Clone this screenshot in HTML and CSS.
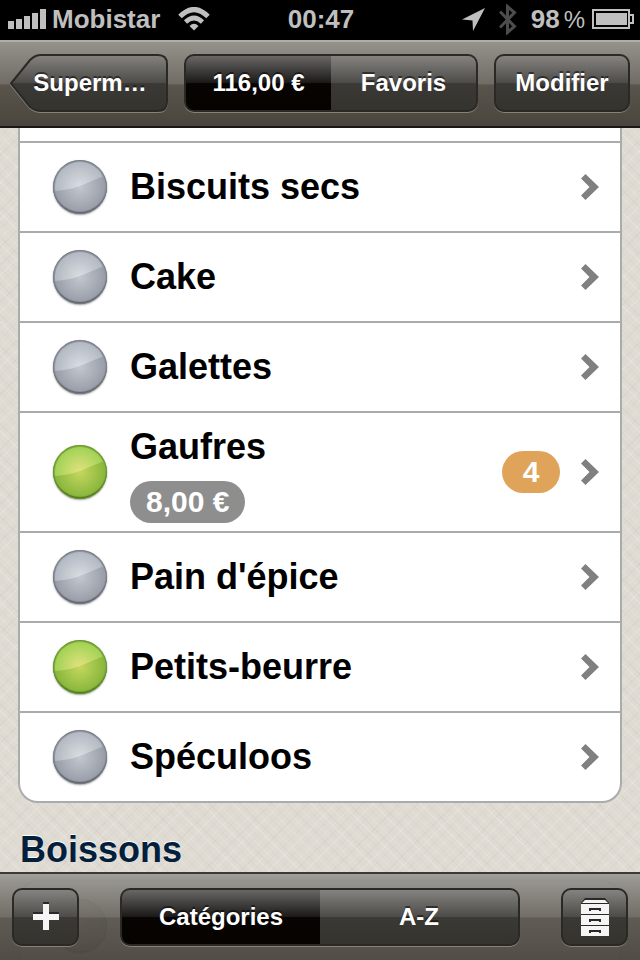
FILE: index.html
```html
<!DOCTYPE html>
<html lang="fr">
<head>
    <meta charset="UTF-8">
    <meta name="viewport" content="width=device-width, initial-scale=1.0">
    <title>Supermarché</title>
    <link rel="stylesheet" href="styles.css">
</head>
<body>
    <svg width="0" height="0" class="defs" aria-hidden="true">
        <symbol id="chevron" viewBox="0 0 18 26">
            <path d="M0 4.500 L4.500 0 L18 13 L4.500 26 L0 21.500 L8.500 13 Z" fill="#808080"/>
        </symbol>
    </svg>

    <div class="status-bar">
        <div class="status-left">
            <svg width="38" height="20" viewBox="0 0 38 20" fill="#bfbfbf">
                <path d="M0 12h6v8H0zM8 10h6v10H8zM16 7h6v13h-6zM24 4h6v16h-6zM32 0h6v20h-6z"/>
            </svg>
            <span class="carrier">Mobistar</span>
            <svg width="32" height="24" viewBox="0 0 32 24">
                <path d="M2 9.500 Q16 -4.500 30 9.500" fill="none" stroke="#bfbfbf" stroke-width="5"/>
                <path d="M7.500 15 Q16 7 24.500 15" fill="none" stroke="#bfbfbf" stroke-width="4.600"/>
                <path d="M11.500 19 Q16 14.500 20.500 19 L16 23.500 Z" fill="#bfbfbf"/>
            </svg>
        </div>
        <span class="clock">00:47</span>
        <div class="status-right">
            <svg width="23" height="23" viewBox="0 0 23 23">
                <path d="M23 0 L11 23 L10.500 12.500 L0 11.500 Z" fill="#bfbfbf"/>
            </svg>
            <svg width="18" height="31" viewBox="0 0 18 31">
                <path d="M1 7.500 L15.500 22.500 L8.500 28.500 V2.500 L15.500 8.500 L1 23.500" fill="none" stroke="#4c4c4c" stroke-width="3"/>
            </svg>
            <span class="battery-level">98<small>%</small></span>
            <svg width="42" height="20" viewBox="0 0 42 20">
                <path d="M1 1 H37 V6 H41 V14 H37 V19 H1 Z" fill="none" stroke="#bfbfbf" stroke-width="2"/>
                <path d="M37 6 V14" stroke="#bfbfbf" stroke-width="2"/>
                <rect x="4" y="4" width="31" height="12" fill="#bfbfbf"/>
            </svg>
        </div>
    </div>

    <header class="navbar">
        <button type="button" class="back-button">
            <svg class="back-shape" viewBox="0 0 158 60" preserveAspectRatio="none">
                <defs>
                    <linearGradient id="back-fill" x1="0" y1="0" x2="0" y2="1">
                        <stop offset="0" stop-color="#85837f"/>
                        <stop offset="0.500" stop-color="#4d4b47"/>
                        <stop offset="0.510" stop-color="#3b3935"/>
                        <stop offset="1" stop-color="#34332e"/>
                    </linearGradient>
                </defs>
                <path d="M1 31 L20 7 Q25 2 31 2 H148 Q157 2 157 11 V49 Q157 58 148 58 H31 Q25 58 20 54 Z" fill="none" stroke="#85827a" stroke-width="2"/>
                <path d="M1 29.500 L20 6 Q25 1 31 1 H148 Q157 1 157 10 V48 Q157 57 148 57 H31 Q25 57 20 53 Z" fill="url(#back-fill)" stroke="#2b2926" stroke-width="2"/>
            </svg>
            <span>Superm…</span>
        </button>
        <div class="segmented">
            <button type="button" class="segment active">116,00 €</button>
            <button type="button" class="segment">Favoris</button>
        </div>
        <button type="button" class="bar-button edit-button">Modifier</button>
    </header>

    <main class="content">
        <ul class="list list-top">
            <li class="row row-cut"></li>
            <li class="row">
                <input type="checkbox" class="dot" aria-label="Biscuits secs">
                <a href="#" class="item">
                    <span class="text"><span class="name">Biscuits secs</span></span>
                    <svg class="chevron"><use href="#chevron"/></svg>
                </a>
            </li>
            <li class="row">
                <input type="checkbox" class="dot" aria-label="Cake">
                <a href="#" class="item">
                    <span class="text"><span class="name">Cake</span></span>
                    <svg class="chevron"><use href="#chevron"/></svg>
                </a>
            </li>
            <li class="row">
                <input type="checkbox" class="dot" aria-label="Galettes">
                <a href="#" class="item">
                    <span class="text"><span class="name">Galettes</span></span>
                    <svg class="chevron"><use href="#chevron"/></svg>
                </a>
            </li>
            <li class="row row-tall">
                <input type="checkbox" class="dot" aria-label="Gaufres" checked>
                <a href="#" class="item">
                    <span class="text">
                        <span class="name">Gaufres</span>
                        <span class="price">8,00 €</span>
                    </span>
                    <span class="count">4</span>
                    <svg class="chevron"><use href="#chevron"/></svg>
                </a>
            </li>
            <li class="row">
                <input type="checkbox" class="dot" aria-label="Pain d'épice">
                <a href="#" class="item">
                    <span class="text"><span class="name">Pain d'épice</span></span>
                    <svg class="chevron"><use href="#chevron"/></svg>
                </a>
            </li>
            <li class="row">
                <input type="checkbox" class="dot" aria-label="Petits-beurre" checked>
                <a href="#" class="item">
                    <span class="text"><span class="name">Petits-beurre</span></span>
                    <svg class="chevron"><use href="#chevron"/></svg>
                </a>
            </li>
            <li class="row">
                <input type="checkbox" class="dot" aria-label="Spéculoos">
                <a href="#" class="item">
                    <span class="text"><span class="name">Spéculoos</span></span>
                    <svg class="chevron"><use href="#chevron"/></svg>
                </a>
            </li>
        </ul>

        <h2 class="section-title">Boissons</h2>
        <ul class="list">
            <li class="row">
                <input type="checkbox" class="dot" aria-label="Boissons">
            </li>
        </ul>
    </main>

    <footer class="toolbar">
        <button type="button" class="bar-button icon-button" aria-label="Ajouter">
            <svg width="26" height="30" viewBox="0 0 26 30">
                <path d="M10 0h6v10h10v6H16v10h-6V16H0v-6h10z" fill="#2b2926"/>
                <path d="M10 2h6v10h10v6H16v10h-6V18H0v-6h10z" fill="#f5f5f5"/>
            </svg>
        </button>
        <div class="segmented">
            <button type="button" class="segment active">Catégories</button>
            <button type="button" class="segment">A-Z</button>
        </div>
        <button type="button" class="bar-button icon-button" aria-label="Rayons">
            <svg width="28" height="38" viewBox="0 0 28 38">
                <path d="M4 0 H24 L28 5 H0 Z" fill="#2b2926"/>
                <path d="M4 2 H24 L27 5 H1 Z" fill="#f5f5f5"/>
                <path d="M0 6h28v10H0zM0 17h28v10H0zM0 28h28v10H0z" fill="#f5f5f5"/>
                <path d="M0 5.500h28M0 16.500h28M0 27.500h28" stroke="#2b2926" stroke-width="1"/>
                <path d="M9 13v-2h10v2M9 24v-2h10v2M9 35v-2h10v2" fill="none" stroke="#2b2926" stroke-width="2"/>
            </svg>
        </button>
    </footer>
</body>
</html>
```

FILE: styles.css
```css
* {
    box-sizing: border-box;
}
body {
    margin: 0;
    height: 100vh;
    display: flex;
    flex-direction: column;
    overflow: hidden;
    font-family: "Liberation Sans", Arial, Helvetica, sans-serif;
    font-weight: bold;
    background-color: #dfdbd3;
}
svg {
    display: block;
    flex: none;
}
.defs {
    position: absolute;
}
button {
    font: inherit;
    color: white;
    border: none;
    padding: 0;
    cursor: pointer;
}

/* status bar */
.status-bar {
    flex: none;
    height: 40px;
    padding: 0 6px 2px 8px;
    display: grid;
    grid-template-columns: 1fr auto 1fr;
    align-items: center;
    background: black;
    color: #bfbfbf;
    font-size: 26px;
    line-height: 30px;
}
.status-left,
.status-right {
    display: flex;
    align-items: center;
}
.carrier {
    margin: 0 18px 0 6px;
}
.status-right {
    justify-content: flex-end;
}
.status-right svg:nth-child(2) {
    margin: 0 14px;
}
.battery-level {
    margin-right: 7px;
}
.battery-level small {
    margin-left: 4px;
    font-size: 24px;
    font-weight: normal;
}

/* bars */
.navbar,
.toolbar {
    height: 88px;
    display: flex;
    align-items: center;
    font-size: 24px;
}
.navbar {
    flex: none;
    gap: 16px;
    padding: 0 10px 2px;
    border-top: 2px solid #b0aea8;
    border-bottom: 2px solid #1c1614;
    background: linear-gradient(#94928b, #706c65 50%, #59544c 51%, #4a463e);
}
.toolbar {
    position: fixed;
    left: 0;
    right: 0;
    bottom: 0;
    gap: 41px;
    padding: 0 12px;
    border-top: 2px solid #3c3a37;
    background: linear-gradient(rgba(158, 156, 150, 0.96), rgba(145, 143, 137, 0.96) 10%, rgba(108, 104, 98, 0.96) 50%, rgba(90, 85, 78, 0.96) 51%, rgba(75, 70, 63, 0.96));
}
.bar-button,
.segmented {
    height: 58px;
    border-radius: 10px;
    border: 2px solid #2b2926;
    box-shadow: 0 1px 0 #85827a;
}
.bar-button,
.segment {
    background: linear-gradient(#85837f, #4d4b47 50%, #3b3935 51%, #34332e);
    text-shadow: 0 -2px 0 rgba(0, 0, 0, 0.5);
}
.segmented {
    flex: 1;
    display: flex;
    overflow: hidden;
    background: #2b2926;
}
.segment {
    flex: 1;
}
.segment.active {
    background: linear-gradient(#696765, #1b1918 50%, #070402 51%, #060200);
}
.edit-button {
    width: 136px;
}
.icon-button {
    width: 67px;
    display: flex;
    align-items: center;
    justify-content: center;
}
.back-button {
    position: relative;
    width: 158px;
    height: 58px;
    padding-left: 2px;
    background: none;
    text-shadow: 0 -2px 0 rgba(0, 0, 0, 0.5);
}
.back-shape {
    position: absolute;
    left: 0;
    top: 0;
    width: 100%;
    height: 60px;
}
.back-button span {
    position: relative;
}

/* list */
.content {
    flex: 1;
    min-height: 0;
    overflow: hidden;
    padding: 0 18px;
    background-color: #dfdbd3;
    background-image:
        repeating-linear-gradient(45deg, rgba(255, 255, 255, 0.16) 0 1px, transparent 1px 5px, rgba(120, 110, 95, 0.05) 5px 6px, transparent 6px 11px),
        repeating-linear-gradient(-45deg, rgba(255, 255, 255, 0.14) 0 1px, transparent 1px 7px, rgba(120, 110, 95, 0.05) 7px 8px, transparent 8px 13px);
}
.list {
    margin: 0;
    padding: 0;
    list-style: none;
    background: white;
    border: 2px solid #a9abad;
    border-radius: 20px;
}
.list-top {
    border-top: none;
    border-radius: 0 0 20px 20px;
}
.row {
    height: 90px;
    display: flex;
    align-items: center;
    gap: 23px;
    padding: 0 21px 0 33px;
    border-bottom: 2px solid #a9abad;
}
.row:last-child {
    height: 88px;
    border-bottom: none;
}
.row-cut {
    height: 15px;
}
.row-tall {
    height: 120px;
}
.item {
    flex: 1;
    display: flex;
    align-items: center;
    gap: 21px;
    color: black;
    text-decoration: none;
}
.text {
    flex: 1;
    display: flex;
    flex-direction: column;
    align-items: flex-start;
    gap: 8px;
}
.name {
    font-size: 36px;
    line-height: 52px;
}
.price,
.count {
    height: 42px;
    border-radius: 21px;
    color: white;
    font-size: 30px;
    line-height: 42px;
    text-align: center;
}
.price {
    padding: 0 16px;
    background: #8e8e8e;
}
.count {
    width: 58px;
    background: #e0a35a;
}
.chevron {
    width: 18px;
    height: 26px;
}
.dot {
    appearance: none;
    flex: none;
    width: 54px;
    height: 54px;
    margin: 0;
    border-radius: 50%;
    background: radial-gradient(circle, #c3c8cf, #9297a2 75%);
    box-shadow: inset 0 0 1px 1px #777b85, inset 0 -2px 1px #5a5d66, 0 1px 2px rgba(0, 0, 0, 0.4);
}
.dot:checked {
    background: radial-gradient(circle, #c5d75e, #80b238 75%);
    box-shadow: inset 0 0 1px 1px #6c9135, inset 0 -2px 1px #4a7218, 0 1px 2px rgba(0, 0, 0, 0.4);
}
.dot::before {
    content: "";
    display: block;
    width: 50px;
    height: 50px;
    margin: 2px;
    border-radius: 50%;
    background: radial-gradient(circle, #dadee2, #b0b6c0 75%);
    clip-path: path("M0 0 H50 V14 C36 18 26 27 0 29 Z");
}
.dot:checked::before {
    background: radial-gradient(circle, #e3e27e, #9dd153 75%);
}
.section-title {
    margin: 25px 2px 8px;
    color: #02203c;
    font-size: 36px;
    line-height: 44px;
    text-shadow: 0 -1px 1px white;
}
```
